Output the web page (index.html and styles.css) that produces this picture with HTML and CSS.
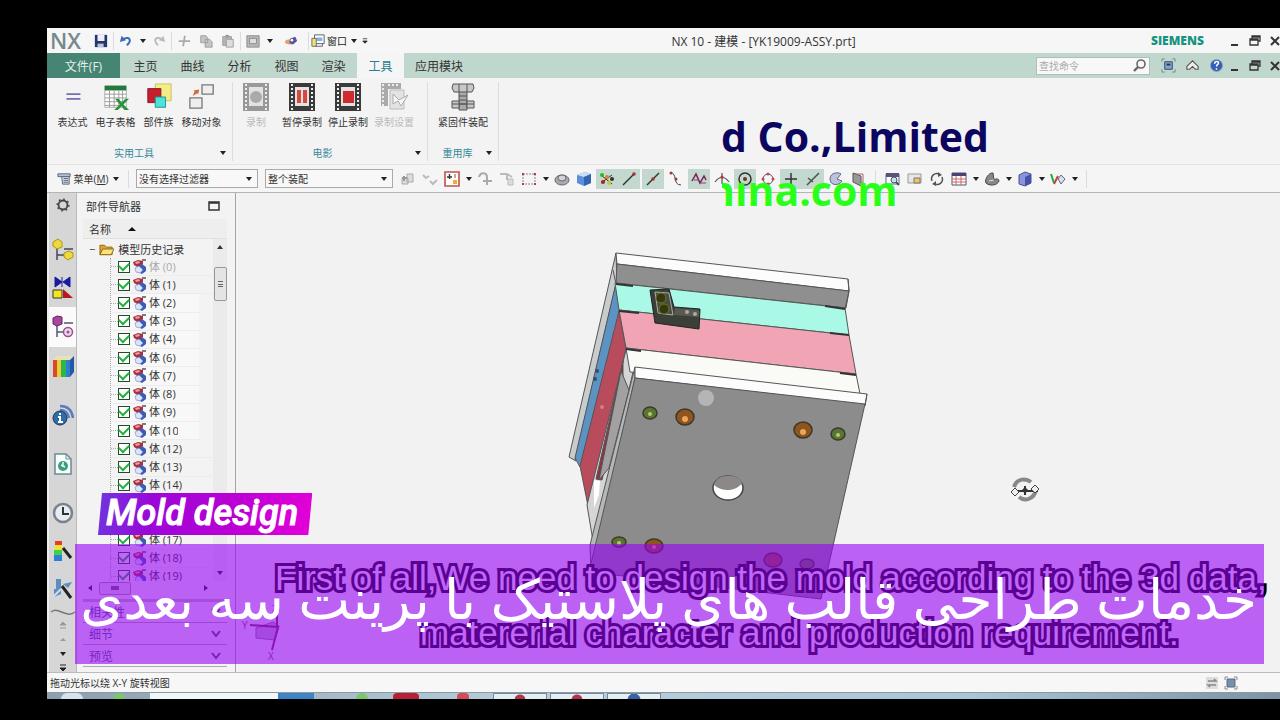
FILE: index.html
```html
<!DOCTYPE html>
<html lang="zh-CN">
<head>
    <meta charset="UTF-8">
    <meta name="viewport" content="width=device-width, initial-scale=1.0">
    <title>NX 10 - 建模 - [YK19009-ASSY.prt]</title>
    <link rel="stylesheet" href="styles.css">
</head>
<body>
    <!-- Shared icons -->
    <svg class="defs" aria-hidden="true">
        <symbol id="down" viewBox="0 0 8 6"><path d="M1 1h6L4 5z" fill="#222"/></symbol>
        <symbol id="min" viewBox="0 0 12 12"><path d="M2 10h7" stroke="currentColor" stroke-width="2"/></symbol>
        <symbol id="restore" viewBox="0 0 12 12"><path d="M3 4V1h8v5H9M1 4h8v6H1zM1 5h8M3 2h8" fill="none" stroke="currentColor" stroke-width="1.3"/></symbol>
        <symbol id="close" viewBox="0 0 12 12"><path d="M2 2l8 8M10 2l-8 8" stroke="currentColor" stroke-width="2"/></symbol>
        <symbol id="part" viewBox="0 0 15 15">
            <path d="M1 3l5-2 5 1v3l-4 4-5-3z" fill="#a93040"/><path d="M3 3l4-1 1 2-4 1z" fill="#e8a0a0"/>
            <path d="M10 1h4" stroke="#555" stroke-width="1.5"/>
            <path d="M6 8l4-3 4 3v4l-4 3-4-2z" fill="#3d5cb8"/><path d="M3 9l4-2 4 4-3 3-4-1z" fill="#dbe6fa" stroke="#6d86c4" stroke-width=".6"/>
        </symbol>
        <symbol id="film" viewBox="0 0 28 30">
            <path d="M1 1h26v28H1z" fill="currentColor"/>
            <path d="M4 2v26M24 2v26" stroke="#eee" stroke-width="2" stroke-dasharray="2 2"/>
            <path d="M7 5h14v19H7z" fill="#e3e3e3"/>
        </symbol>
        <symbol id="chev" viewBox="0 0 10 8"><path d="M1 1l4 5 4-5" fill="none" stroke="#4a4a66" stroke-width="2"/></symbol>
    </svg>

    <div class="screen">
        <div class="app">
            <header class="titlebar">
                <span class="logo">NX</span>
                <div class="quick">
                    <button class="tool" aria-label="保存"><svg viewBox="0 0 16 16"><path d="M1 1h14v14H1z" fill="#26356b"/><path d="M4 1h8v7H4z" fill="#eef"/><path d="M4 11h7v4H4z" fill="#bcc4dd"/></svg></button>
                    <i class="sep"></i>
                    <button class="tool" aria-label="撤消"><svg viewBox="0 0 16 16"><path d="M4 7c3-4 10-3 8 2-1 2-2 3-3 4" fill="none" stroke="#3a6cb8" stroke-width="2.4"/><path d="M1 9l2-7 5 5z" fill="#3a6cb8"/></svg></button>
                    <button class="arrow" aria-label="撤消列表"><svg><use href="#down"/></svg></button>
                    <button class="tool" aria-label="重做"><svg viewBox="0 0 16 16"><path d="M12 7C9 3 2 4 4 9c1 2 2 3 3 4" fill="none" stroke="#bbb" stroke-width="2.2"/><path d="M15 9l-2-7-5 5z" fill="#bbb"/></svg></button>
                    <i class="sep"></i>
                    <button class="tool" aria-label="剪切"><svg viewBox="0 0 16 16"><path d="M2 8h13M9 2L7 14" stroke="#aaa" stroke-width="2"/></svg></button>
                    <button class="tool" aria-label="复制"><svg viewBox="0 0 16 16"><path d="M2 2h6l2 3v5H2zM7 6h5l3 3v6H7z" fill="#c6c6c6" stroke="#999"/></svg></button>
                    <button class="tool" aria-label="粘贴"><svg viewBox="0 0 16 16"><path d="M2 3h10v10H2z" fill="#b5b5b5" stroke="#999"/><path d="M5 1h4v3H5z" fill="#999"/><path d="M6 6h8v9H6z" fill="#ddd" stroke="#999"/></svg></button>
                    <i class="sep"></i>
                    <button class="tool" aria-label="命令"><svg viewBox="0 0 16 16"><path d="M1 2h14v13H1z" fill="#b7b7b7" stroke="#888"/><path d="M4 5h8v6H4z" fill="#ddd" stroke="#888"/></svg></button>
                    <button class="arrow" aria-label="命令列表"><svg><use href="#down"/></svg></button>
                    <button class="tool wide" aria-label="触控"><svg viewBox="0 0 16 16"><ellipse cx="7" cy="9" rx="6" ry="3" fill="#e4a06e"/><path d="M7 5l6-2 2 5-5 4-4-2z" fill="#55549c"/><circle cx="9" cy="7" r="1.5" fill="#fff"/></svg></button>
                    <i class="sep"></i>
                    <button class="tool window-menu"><svg viewBox="0 0 16 16"><path d="M4 1h11v10H4z" fill="#fff" stroke="#456"/><path d="M6 4h7v4H6z" fill="#8cb0e0"/><path d="M1 5h5v9H1z" fill="#efe07a" stroke="#665"/><path d="M5 14h8v-3" fill="none" stroke="#557"/></svg>窗口</button>
                    <button class="arrow" aria-label="窗口列表"><svg><use href="#down"/></svg></button>
                    <button class="arrow" aria-label="工具条选项"><svg viewBox="0 0 8 8"><path d="M1 1h6M1 4h6L4 7z" fill="#222" stroke="#222"/></svg></button>
                </div>
                <h1 class="title">NX 10 - 建模 - [YK19009-ASSY.prt]</h1>
                <span class="brand">SIEMENS</span>
                <div class="win">
                    <button aria-label="最小化"><svg><use href="#min"/></svg></button>
                    <button aria-label="还原"><svg><use href="#restore"/></svg></button>
                    <button aria-label="关闭"><svg><use href="#close"/></svg></button>
                </div>
            </header>

            <nav class="tabs">
                <a class="tab file" href="#file">文件(F)</a>
                <a class="tab" href="#home">主页</a>
                <a class="tab" href="#curve">曲线</a>
                <a class="tab" href="#analysis">分析</a>
                <a class="tab" href="#view">视图</a>
                <a class="tab" href="#render">渲染</a>
                <a class="tab active" href="#tools">工具</a>
                <a class="tab auto" href="#application">应用模块</a>
                <label class="search">
                    <input type="text" placeholder="查找命令" aria-label="查找命令">
                    <svg viewBox="0 0 14 14"><circle cx="8" cy="5" r="4" fill="none" stroke="#666" stroke-width="1.6"/><path d="M5 8l-4 4" stroke="#666" stroke-width="2.4"/></svg>
                </label>
                <div class="tab-tools">
                    <button aria-label="全屏"><svg viewBox="0 0 16 16"><path d="M1 4V1h3M12 1h3v3M15 12v3h-3M4 15H1v-3" fill="none" stroke="#789"/><path d="M4 4h8v8H4z" fill="#7fa6d8" stroke="#345"/><path d="M6 6h4v2H6z" fill="#235"/></svg></button>
                    <button aria-label="最小化功能区"><svg viewBox="0 0 16 16"><path d="M2 9l6-6 6 6v3h-3L8 9l-3 3H2z" fill="#eee" stroke="#555" stroke-width="1.2"/></svg></button>
                    <button aria-label="帮助"><svg viewBox="0 0 16 16"><circle cx="8" cy="8" r="6.5" fill="#3460b4" stroke="#9ab"/><path d="M6 6c0-3 5-3 4 0-.5 1-2 1-2 3M8 11v1.6" fill="none" stroke="#fff" stroke-width="1.6"/></svg></button>
                </div>
                <div class="win">
                    <button aria-label="最小化部件"><svg><use href="#min"/></svg></button>
                    <button aria-label="还原部件"><svg><use href="#restore"/></svg></button>
                    <button aria-label="关闭部件"><svg><use href="#close"/></svg></button>
                </div>
            </nav>

            <div class="ribbon">
                <section class="group">
                    <div class="commands">
                        <button class="cmd"><svg viewBox="0 0 30 30"><path d="M8 12h15M8 17h15" stroke="#7272b0" stroke-width="1.8"/></svg>表达式</button>
                        <button class="cmd"><svg viewBox="0 0 30 30"><path d="M3 3h23v23H3z" fill="#fff" stroke="#aaa"/><path d="M3 3h23v5H3z" fill="#23783c"/><path d="M3 12h23M3 16h23M3 20h23M3 24h20M8 8v18M13 8v18M18 8v18M22 8v18" stroke="#9a9a9a"/><path d="M14 17h4l3 4 4-4h4l-6 6 6 6h-5l-3-4-4 4h-4l6-6z" fill="#27933c"/></svg>电子表格</button>
                        <button class="cmd"><svg viewBox="0 0 30 30"><path d="M11 1h17v18H11z" fill="#f4ed86" stroke="#c9bf60"/><path d="M3 6h14v15H3z" fill="#c71e2d" stroke="#851520"/><path d="M11 15h11v11H11z" fill="#4de3dd" stroke="#1d938e"/></svg>部件族</button>
                        <button class="cmd"><svg viewBox="0 0 30 30"><path d="M15 2h12v10H15zM2 16h13v11H2z" fill="#eee" stroke="#777" stroke-width="1.4"/><path d="M5 14l2-5-1-1 6-1-1 5-1-1z" fill="#d06a35"/></svg>移动对象</button>
                    </div>
                    <footer class="group-name"><span>实用工具</span><button class="arrow" aria-label="实用工具选项"><svg><use href="#down"/></svg></button></footer>
                </section>
                <section class="group movie">
                    <div class="commands">
                        <button class="cmd off"><svg viewBox="0 0 28 30"><use href="#film"/><circle cx="14" cy="15" r="6" fill="#aaa"/></svg>录制</button>
                        <button class="cmd dark"><svg viewBox="0 0 28 30"><use href="#film"/><path d="M9 8h4v13H9zM15 8h4v13h-4z" fill="#d7473d"/></svg>暂停录制</button>
                        <button class="cmd dark"><svg viewBox="0 0 28 30"><use href="#film"/><path d="M9 9h11v12H9z" fill="#cf2b2e"/></svg>停止录制</button>
                        <button class="cmd off"><svg viewBox="0 0 28 30"><path d="M1 1h20v6H8v17H1z" fill="#aaa"/><path d="M3 2v22M8 3h12" stroke="#eee" stroke-dasharray="2 2" stroke-width="2"/><path d="M10 8h14v19H10z" fill="#e3e3e3" stroke="#bbb"/><path d="M13 12l6 6 9-5-7 11-3-5-5 3z" fill="#f6f6f6" stroke="#aaa"/></svg>录制设置</button>
                    </div>
                    <footer class="group-name"><span>电影</span><button class="arrow" aria-label="电影选项"><svg><use href="#down"/></svg></button></footer>
                </section>
                <section class="group reuse">
                    <div class="commands">
                        <button class="cmd"><svg viewBox="0 0 28 30"><path d="M10 8h8v20h-8z" fill="#aaa" stroke="#555"/><path d="M4 2h20l1 4-2 4H5L3 6zM3 19h7v7H3zM18 19h7v7h-7z" fill="#c8c8c8" stroke="#555"/><path d="M10 2v8M18 2v8M10 14h8M10 18h8M10 22h8M3 22h22" stroke="#555"/></svg>紧固件装配</button>
                    </div>
                    <footer class="group-name"><span>重用库</span><button class="arrow" aria-label="重用库选项"><svg><use href="#down"/></svg></button></footer>
                </section>
            </div>

            <div class="selbar">
                <button class="menu"><svg viewBox="0 0 16 16"><path d="M1 3h13v3H1z" fill="#b8c3d4" stroke="#567"/><path d="M5 6h8v8H6z" fill="#dde" stroke="#567"/><path d="M7 8h5M7 10h5M7 12h5" stroke="#567"/></svg><span>菜单(<u>M</u>)</span><svg class="caret"><use href="#down"/></svg></button>
                <i class="sep"></i>
                <label class="combo"><select aria-label="类型过滤器"><option>没有选择过滤器</option></select><svg><use href="#down"/></svg></label>
                <label class="combo"><select aria-label="选择范围"><option>整个装配</option></select><svg><use href="#down"/></svg></label>
                <div class="sel-tools">
                    <button class="tool" aria-label="部件间"><svg viewBox="0 0 16 16"><path d="M2 7h6v6H2zM7 3h6v8H7z" fill="#ddd" stroke="#aaa"/><path d="M4 5v5M2 7h5" stroke="#999" stroke-width="2"/></svg></button>
                    <button class="tool" aria-label="关联"><svg viewBox="0 0 16 16"><path d="M1 4l3 3 3-2M8 10l3 3 4-4" fill="none" stroke="#bbb" stroke-width="2"/></svg></button>
                    <button class="tool" aria-label="常规选择过滤器"><svg viewBox="0 0 16 16"><path d="M1 1h14v14H1z" fill="#fff" stroke="#c0504d" stroke-width="1.6"/><path d="M3 6h5M5.500 3v5" stroke="#333" stroke-width="1.4"/><path d="M9 9h4v4H9z" fill="#efad2f"/><path d="M11 3v4" stroke="#a44"/></svg></button>
                    <button class="arrow" aria-label="过滤器列表"><svg><use href="#down"/></svg></button>
                    <button class="tool" aria-label="移动"><svg viewBox="0 0 16 16"><path d="M2 6c2-6 8-4 8 0v8M6 10h9" fill="none" stroke="#aaa" stroke-width="2"/></svg></button>
                    <button class="tool" aria-label="对齐"><svg viewBox="0 0 16 16"><path d="M1 3h7l5 3M8 4v5" fill="none" stroke="#bbb" stroke-width="2"/><path d="M9 8h5v6H9z" fill="#ddd" stroke="#bbb"/></svg></button>
                    <button class="tool" aria-label="矩形"><svg viewBox="0 0 16 16"><path d="M2 3h12v10H2z" fill="none" stroke="#888" stroke-dasharray="2 1"/><path d="M1 2h2v2H1zM13 2h2v2h-2zM1 12h2v2H1zM13 12h2v2h-2z" fill="#a44"/></svg></button>
                    <button class="arrow" aria-label="选择方式"><svg><use href="#down"/></svg></button>
                    <button class="tool" aria-label="着色"><svg viewBox="0 0 16 16"><ellipse cx="8" cy="9" rx="7" ry="5" fill="#aaa8b3" stroke="#666"/><ellipse cx="8" cy="7" rx="4" ry="3" fill="#d5d0da" stroke="#766"/></svg></button>
                    <button class="tool" aria-label="实体"><svg viewBox="0 0 16 16"><path d="M1 4l8-3 6 2v9l-7 3-7-3z" fill="#5b8fdb"/><path d="M1 4l8-3 6 2-7 3z" fill="#c9dff8"/><path d="M8 6l7-3v9l-7 3z" fill="#3565b0"/></svg></button>
                    <div class="on">
                        <button class="tool" aria-label="捕捉点"><svg viewBox="0 0 16 16"><path d="M2 4l11 9M2 12l11-8" stroke="#333"/><g fill="#2b2"><circle cx="3" cy="4" r="2"/><circle cx="13" cy="8" r="2" fill="#333"/></g><circle cx="8" cy="6" r="2" fill="#d82"/><circle cx="4" cy="11" r="2" fill="#a22"/><circle cx="10" cy="12" r="2" fill="#cc2"/></svg></button>
                        <button class="tool" aria-label="端点"><svg viewBox="0 0 16 16"><path d="M2 14L13 3" stroke="#333" stroke-width="1.4"/><circle cx="13" cy="3" r="1.800" fill="#a33"/></svg></button>
                    </div>
                    <div class="on"><button class="tool" aria-label="中点"><svg viewBox="0 0 16 16"><path d="M2 14L14 2" stroke="#333" stroke-width="1.4"/><circle cx="8" cy="8" r="1.800" fill="#a33"/></svg></button></div>
                    <button class="tool" aria-label="控制点"><svg viewBox="0 0 16 16"><path d="M2 2c8-1 2 12 11 12" fill="none" stroke="#444"/><circle cx="3" cy="2" r="1.500" fill="#a33"/><circle cx="8" cy="8" r="1.500" fill="#a33"/></svg></button>
                    <div class="on"><button class="tool" aria-label="极点"><svg viewBox="0 0 16 16"><path d="M1 10L5 3l4 9 4-7 2 4" fill="none" stroke="#725" stroke-width="1.500"/><path d="M3 9h5M10 12h5" stroke="#a38"/></svg></button></div>
                    <button class="tool" aria-label="交点"><svg viewBox="0 0 16 16"><path d="M1 11c4-6 10-6 14 0M8 2v11" fill="none" stroke="#555" stroke-width="1.2"/><circle cx="8" cy="6" r="1.500" fill="#a33"/></svg></button>
                    <div class="on"><button class="tool" aria-label="圆心"><svg viewBox="0 0 16 16"><circle cx="8" cy="8" r="6" fill="none" stroke="#333" stroke-width="1.5"/><circle cx="8" cy="8" r="2" fill="#732"/></svg></button></div>
                    <button class="tool" aria-label="象限点"><svg viewBox="0 0 16 16"><circle cx="8" cy="8" r="5" fill="none" stroke="#555"/><g fill="#c44"><circle cx="8" cy="3" r="1.500"/><circle cx="8" cy="13" r="1.500"/><circle cx="3" cy="8" r="1.500"/><circle cx="13" cy="8" r="1.500"/></g></svg></button>
                    <div class="on">
                        <button class="tool" aria-label="现有点"><svg viewBox="0 0 16 16"><path d="M2 8h12M8 2v12" stroke="#333" stroke-width="1.500"/></svg></button>
                        <button class="tool" aria-label="曲线上的点"><svg viewBox="0 0 16 16"><path d="M2 14L14 2M3 7l5 4" stroke="#454" stroke-width="1.500"/></svg></button>
                    </div>
                    <button class="tool" aria-label="面上的点"><svg viewBox="0 0 16 16"><path d="M2 8c0-7 9-7 11-5l-4 5 5 2c-3 5-12 5-12-2z" fill="#b9c2df" stroke="#668"/></svg></button>
                    <button class="tool" aria-label="有界栅格"><svg viewBox="0 0 16 16"><path d="M3 2l8 3v10l-8-4z" fill="#999" stroke="#555"/><path d="M5 3h8v9h-2" fill="none" stroke="#a66"/></svg></button>
                    <i class="sep"></i>
                    <button class="tool" aria-label="查找窗口"><svg viewBox="0 0 16 16"><path d="M1 3h13v10H1z" fill="#fff" stroke="#668"/><path d="M1 2h13v4H1z" fill="#557"/><circle cx="9" cy="9" r="3" fill="#cde" stroke="#456"/><path d="M11 11l3 3" stroke="#456" stroke-width="2"/></svg></button>
                    <button class="tool" aria-label="缩放"><svg viewBox="0 0 16 16"><path d="M1 3h13v9H1z" fill="#e6e6e6" stroke="#999"/><path d="M7 7h6v5H7z" fill="#efc65a" stroke="#777"/></svg></button>
                    <button class="tool" aria-label="旋转"><svg viewBox="0 0 16 16"><path d="M3 10C1 5 6 1 10 3M13 6c2 5-3 9-7 7" fill="none" stroke="#555" stroke-width="1.500"/><path d="M9 1l4 3-4 2zM7 10l-4 3 4 2z" fill="#555"/></svg></button>
                    <button class="tool" aria-label="布局"><svg viewBox="0 0 16 16"><path d="M1 2h14v12H1z" fill="#fff" stroke="#557"/><path d="M1 2h14v3H1z" fill="#447"/><path d="M1 8h14M1 11h14M5 5v9M10 5v9" stroke="#c66"/></svg></button>
                    <button class="arrow" aria-label="布局列表"><svg><use href="#down"/></svg></button>
                    <button class="tool" aria-label="渲染样式"><svg viewBox="0 0 16 16"><path d="M2 12c-2-3 3-11 7-10l1 7c3-2 5-1 5 1-2 5-10 5-13 2z" fill="#888" stroke="#444"/><path d="M5 10l5-1" stroke="#ddd"/></svg></button>
                    <button class="arrow" aria-label="样式列表"><svg><use href="#down"/></svg></button>
                    <button class="tool" aria-label="定向视图"><svg viewBox="0 0 16 16"><path d="M2 4l6-3 6 2v9l-6 3-6-2z" fill="#8a93dd" stroke="#458"/><path d="M8 6l6-3v9l-6 3z" fill="#4550ac"/></svg></button>
                    <button class="arrow" aria-label="视图列表"><svg><use href="#down"/></svg></button>
                    <button class="tool" aria-label="编辑截面"><svg viewBox="0 0 16 16"><path d="M1 3l3 9" stroke="#2a3" stroke-width="2"/><path d="M4 13l4-8" stroke="#b44" stroke-width="2"/><path d="M8 8l3-4 4 4-4 5z" fill="#dde" stroke="#668"/></svg></button>
                    <button class="arrow" aria-label="截面列表"><svg><use href="#down"/></svg></button>
                    <i class="sep"></i>
                </div>
            </div>

            <main class="work">
                <aside class="resource">
                    <button class="gear" aria-label="资源条选项"><svg viewBox="0 0 20 20"><circle cx="10" cy="10" r="5" fill="none" stroke="#444" stroke-width="2"/><circle cx="10" cy="10" r="6.500" fill="none" stroke="#444" stroke-width="1.500" stroke-dasharray="2 3"/></svg></button>
                    <button aria-label="装配导航器"><svg viewBox="0 0 24 24"><path d="M6 10v12M6 17h8M13 11h9" fill="none" stroke="#446" stroke-width="1.500"/><path d="M2 4l5-3 4 3v5l-5 2-4-3zM13 15l5-2 4 2v4l-5 3-4-3z" fill="#f0d545" stroke="#a90"/></svg></button>
                    <button aria-label="约束导航器"><svg viewBox="0 0 24 24"><path d="M4 1v10l7-5zM19 1v10l-7-5zM11 1v10" fill="#1a1aa0" stroke="#1a1aa0"/><path d="M2 14h9v8H2z" fill="#f5e51e" stroke="#333"/><path d="M12 13l10 9H12z" fill="#b91820"/></svg></button>
                    <button class="current" aria-label="部件导航器"><svg viewBox="0 0 24 24"><path d="M6 10v12M6 17h7M13 8h9" fill="none" stroke="#557" stroke-width="1.500"/><path d="M2 3l4-2 5 1v7l-5 2-4-2z" fill="#a4479d" stroke="#6e2268"/><circle cx="17" cy="17" r="4.500" fill="#ecd6ec" stroke="#96528f" stroke-width="1.500"/><circle cx="17" cy="17" r="1.500" fill="#96528f"/></svg></button>
                    <button aria-label="重用库"><svg viewBox="0 0 24 24"><path d="M2 6l4-4h17l-4 4z" fill="#e9e0b4"/><path d="M2 6h5v17H2z" fill="#d8492d"/><path d="M6 6h4v17H6z" fill="#e7cf35"/><path d="M10 6h5v17h-5z" fill="#2fb64b"/><path d="M15 6h4v17h-4z" fill="#2e7dd0"/><path d="M19 6l4-4v16l-4 5z" fill="#2158a8"/></svg></button>
                    <button class="tall" aria-label="HD3D 工具"><svg viewBox="0 0 24 24"><path d="M9 3c7 0 12 4 13 12M9 7c5 0 8 3 9 8" fill="none" stroke="#5a7dbd" stroke-width="2.4"/><circle cx="9" cy="15" r="7" fill="#2f6da7" stroke="#235"/><path d="M9 10v2M7 14h2v5M7 19h5" stroke="#fff" stroke-width="2"/></svg></button>
                    <button class="tall" aria-label="Web 浏览器"><svg viewBox="0 0 24 24"><path d="M4 2h11l5 5v15H4z" fill="#f8ffff" stroke="#6a8b95" stroke-width="1.500"/><path d="M15 2v5h5" fill="none" stroke="#6a8b95"/><circle cx="12" cy="14" r="5" fill="#3d9c79"/><path d="M12 10v5M10 13l4 2" stroke="#dff" stroke-width="1.500"/></svg></button>
                    <button class="tall" aria-label="历史记录"><svg viewBox="0 0 24 24"><circle cx="12" cy="12" r="9" fill="#e7ecf3" stroke="#7a828f" stroke-width="2.500"/><path d="M12 6v7h6" fill="none" stroke="#333" stroke-width="2"/></svg></button>
                    <button aria-label="系统材料"><svg viewBox="0 0 24 24"><path d="M4 2h7v4H4z" fill="#e0402b"/><path d="M4 6h7v5H4z" fill="#f4e32b"/><path d="M3 11h8v5H3z" fill="#3fd04c"/><path d="M3 16h8v6H3z" fill="#2b7fd6"/><path d="M12 9l8 10" stroke="#222" stroke-width="3"/></svg></button>
                    <button aria-label="加工向导"><svg viewBox="0 0 24 24"><path d="M5 2h5v15l-7 3v-8h2zM12 7l9-2-4 6z" fill="#5c8fbf"/><path d="M11 9l9 12" stroke="#222" stroke-width="3"/><path d="M2 20l8-8" stroke="#cde" stroke-width="2"/></svg></button>
                    <div class="more">
                        <svg viewBox="0 0 26 8"><path d="M1 4c8-6 15 7 24 0" fill="none" stroke="#777" stroke-width="1.500"/></svg>
                        <svg class="mini" viewBox="0 0 8 8"><path d="M1 3h6L4 0zM1 6h6" fill="#999" stroke="#999"/></svg>
                        <svg class="mini" viewBox="0 0 8 8"><path d="M1 5h6L4 2z" fill="#999"/></svg>
                        <svg class="mini" viewBox="0 0 8 8"><path d="M1 2h6L4 6z" fill="#222"/></svg>
                        <svg class="mini" viewBox="0 0 8 8"><path d="M1 1h6M1 4h6L4 7z" fill="#222" stroke="#222"/></svg>
                    </div>
                </aside>

                <section class="navigator">
                    <h2 class="nav-title">部件导航器<button aria-label="浮动"><svg viewBox="0 0 12 10"><path d="M1 1h10v8H1zM1 2h10" fill="none" stroke="#333" stroke-width="1.500"/></svg></button></h2>
                    <div class="nav-col">名称<svg viewBox="0 0 10 6"><path d="M1 5h8L5 1z" fill="#111"/></svg></div>
                    <div class="tree">
                        <div class="tree-main">
                            <div class="root"><span>−</span><svg viewBox="0 0 16 14"><path d="M1 3h5l2 2h6v8H1z" fill="#e0a526" stroke="#8a6714"/><path d="M4 7h12l-3 6H1z" fill="#fbe27a" stroke="#8a6714"/></svg>模型历史记录</div>
                            <ul class="bodies">
                                <li class="dim"><label><input type="checkbox" checked><svg><use href="#part"/></svg>体 (0)</label></li>
                                <li><label><input type="checkbox" checked><svg><use href="#part"/></svg>体 (1)</label></li>
                                <li class="lit"><label><input type="checkbox" checked><svg><use href="#part"/></svg>体 (2)</label></li>
                                <li class="lit"><label><input type="checkbox" checked><svg><use href="#part"/></svg>体 (3)</label></li>
                                <li class="lit"><label><input type="checkbox" checked><svg><use href="#part"/></svg>体 (4)</label></li>
                                <li class="lit"><label><input type="checkbox" checked><svg><use href="#part"/></svg>体 (6)</label></li>
                                <li class="lit"><label><input type="checkbox" checked><svg><use href="#part"/></svg>体 (7)</label></li>
                                <li class="lit"><label><input type="checkbox" checked><svg><use href="#part"/></svg>体 (8)</label></li>
                                <li class="lit"><label><input type="checkbox" checked><svg><use href="#part"/></svg>体 (9)</label></li>
                                <li class="lit cut"><label><input type="checkbox" checked><svg><use href="#part"/></svg>体 (10)</label></li>
                                <li><label><input type="checkbox" checked><svg><use href="#part"/></svg>体 (12)</label></li>
                                <li><label><input type="checkbox" checked><svg><use href="#part"/></svg>体 (13)</label></li>
                                <li><label><input type="checkbox" checked><svg><use href="#part"/></svg>体 (14)</label></li>
                                <li><label><input type="checkbox" checked aria-label="体 15"><svg><use href="#part"/></svg></label></li>
                                <li><label><input type="checkbox" checked aria-label="体 16"><svg><use href="#part"/></svg></label></li>
                                <li><label><input type="checkbox" checked><svg><use href="#part"/></svg>体 (17)</label></li>
                                <li><label><input type="checkbox" checked><svg><use href="#part"/></svg>体 (18)</label></li>
                                <li><label><input type="checkbox" checked><svg><use href="#part"/></svg>体 (19)</label></li>
                            </ul>
                        </div>
                        <div class="vscroll">
                            <svg viewBox="0 0 8 6"><path d="M1 5h6L4 1z" fill="#333"/></svg>
                            <span class="thumb"></span>
                            <svg class="end"><use href="#down"/></svg>
                        </div>
                    </div>
                    <div class="hscroll">
                        <svg viewBox="0 0 6 8"><path d="M5 1v6L1 4z" fill="#222"/></svg>
                        <span class="thumb"></span>
                        <svg class="end" viewBox="0 0 6 8"><path d="M1 1v6l4-3z" fill="#222"/></svg>
                    </div>
                    <button class="fold">相关性<svg><use href="#chev"/></svg></button>
                    <button class="fold">细节<svg><use href="#chev"/></svg></button>
                    <button class="fold">预览<svg><use href="#chev"/></svg></button>
                </section>

                <div class="viewport">
                    <svg class="model" viewBox="236 193 1044 479" role="img" aria-label="模具装配">
                        <g stroke="#555" stroke-width="1" stroke-linejoin="round">
                            <path d="M616 253l1 30-41 178-7-4z" fill="#c9cccd"/>
                            <path d="M613 270l3 14-41 176" fill="none"/>
                            <path d="M616 283l4 28-40 156-5-9z" fill="#5d93c3"/>
                            <path d="M619 311l7 38-38 157-8-40z" fill="#b94c5c"/>
                            <path d="M626 350l8 18-41 173-6-36z" fill="#d5d5d5"/>
                            <path d="M623 361l-27 118 6 1 21-90z" fill="#8e3343"/>
                            <path d="M621 371l8 19-20 78-10 12z" fill="#a3a0a2"/>
                            <path d="M616 253l232 26 1 12-232-27z" fill="#fcfcfc"/>
                            <path d="M617 264l232 27-3 17-230-25z" fill="#8f8f8f"/>
                            <path d="M848 279l1 12-4 18" fill="none"/>
                            <path d="M615 283l230 25 4 27-230-25z" fill="#aaf8e6"/>
                            <path d="M619 310l230 25 7 39-230-26z" fill="#f1a4b4"/>
                            <path d="M626 348l230 26 4 20-230-22z" fill="#fafaf7"/>
                            <path d="M635 367l-45 178 1 28 44-195z" fill="#b5b8b8"/>
                            <path d="M635 367l232 27-2 11-230-27z" fill="#fcfcfc"/>
                            <path d="M635 378l230 26-44 195-232-27z" fill="#8c8c8c"/>
                            <path d="M867 394l-2 12" fill="none"/>
                        </g>
                        <path d="M616 284l17 2M619 311l20 2M626 349l15 2M825 306l20 3M830 333l19 2M840 373l16 2" stroke="#333" stroke-width="2"/>
                        <path d="M594 480l6 1-1 14-5 13z" fill="#fff"/>
                        <g fill="#34506a"><circle cx="597" cy="371" r="2"/><circle cx="595" cy="379" r="2"/><circle cx="602" cy="407" r="2" fill="#e07a80"/></g>

                        <!-- connector block -->
                        <path d="M650 290l19-1 5 18 26 2-1 20-44-6z" fill="#3b3f38" stroke="#222"/>
                        <path d="M655 292l14 1 4 22-15-2z" fill="#494c40" stroke="#aaa"/>
                        <circle cx="661" cy="298" r="5" fill="#343811" stroke="#717522"/>
                        <circle cx="664" cy="309" r="5" fill="#343811" stroke="#717522"/>
                        <path d="M675 308l24 2v7l-25-2z" fill="#585a52"/>
                        <circle cx="687" cy="312" r="2" fill="#aaa"/><circle cx="695" cy="314" r="2" fill="#aaa"/>

                        <!-- bolts -->
                        <g stroke="#3b3a22" stroke-width="1.500">
                            <g fill="#5a7438"><ellipse cx="650" cy="413" rx="7" ry="6"/><ellipse cx="838" cy="434" rx="7" ry="6"/><ellipse cx="619" cy="542" rx="7" ry="5"/><ellipse cx="807" cy="564" rx="7" ry="5"/></g>
                            <g fill="#8f5420"><ellipse cx="685" cy="417" rx="9" ry="8"/><ellipse cx="803" cy="430" rx="9" ry="8"/><ellipse cx="654" cy="546" rx="9" ry="7"/><ellipse cx="773" cy="560" rx="9" ry="7"/></g>
                        </g>
                        <g fill="#b8c95e"><circle cx="650" cy="414" r="2"/><circle cx="838" cy="435" r="2"/><circle cx="619" cy="543" r="2"/></g>
                        <g fill="#e9a75a"><circle cx="685" cy="419" r="3"/><circle cx="803" cy="432" r="3"/><circle cx="654" cy="547" r="2"/></g>
                        <circle cx="706" cy="398" r="8" fill="#b5b5b5"/>
                        <ellipse cx="728" cy="488" rx="15" ry="12" fill="#fff" stroke="#444" stroke-width="1.500"/>
                        <path d="M714 485c2-12 25-12 28-2-6 9-20 9-28 2z" fill="#8c8888"/>

                        <!-- rotate cursor -->
                        <g fill="none" stroke="#888" stroke-width="4"><path d="M1014 487c3-9 12-9 17-5M1019 497c6 5 15 2 17-7"/></g>
                        <path d="M1013 491h25M1025 486v9" stroke="#333" stroke-width="2"/>
                        <path d="M1011 492l4-4 4 4-4 4zM1031 489l4-4 4 4-4 4z" fill="#eee" stroke="#444"/>
                        <path d="M1022 490l3-3 3 3-3 4z" fill="#333"/>

                        <!-- WCS triad -->
                        <path d="M256 628l17-6 6 4-4 14-19-2z" fill="#c4b5c9" stroke="#857590"/>
                        <path d="M250 625l28 2-6 23M277 626v-11" fill="none" stroke="#733060" stroke-width="2"/>
                        <g class="axis"><text x="272" y="613">Z</text><text x="242" y="629">Y</text><text x="268" y="660">X</text></g>
                    </svg>
                </div>
            </main>

            <footer class="status">
                <span>拖动光标以绕 X-Y 旋转视图</span>
                <div class="status-icons">
                    <svg viewBox="0 0 14 14"><path d="M1 1h12v12H1z" fill="#ddd"/><path d="M3 5h8l-2-2M11 9H3l2 2" fill="none" stroke="#888" stroke-width="1.500"/></svg>
                    <svg viewBox="0 0 14 14"><path d="M1 4V1h3M10 1h3v3M13 10v3h-3M4 13H1v-3" fill="none" stroke="#888"/><path d="M3 3h8v8H3z" fill="#6f93b4" stroke="#667"/></svg>
                </div>
            </footer>
            <div class="taskbar">
                <i class="orb"></i><i class="leaf"></i><i class="pane"></i><i class="blue"></i><i class="leaf"></i><i class="red"></i><i class="red small"></i><i class="task"></i><i class="task"></i><i class="task"></i>
            </div>
        </div>

        <div class="company">d Co.,Limited</div>
        <div class="site"><span>hina.com</span></div>
        <div class="badge"><span>Mold design</span></div>
        <div class="caption" lang="en">
            <p>First of all,We need to design the mold according to the 3d data,</p>
            <p class="second">matererial character and production requirement.</p>
        </div>
        <div class="banner" lang="fa" dir="rtl">خدمات طراحی قالب های پلاستیک با پرینت سه بعدی</div>
    </div>
</body>
</html>
```
FILE: styles.css
```css
* {
    box-sizing: border-box;
}
body {
    margin: 0;
    background: #000;
    color: #333;
    font-family: "Open Sans", "Noto Sans CJK SC", sans-serif;
    font-size: 10px;
}
button {
    display: flex;
    align-items: center;
    justify-content: center;
    margin: 0;
    padding: 0;
    border: 0;
    background: none;
    color: inherit;
    font: inherit;
    white-space: nowrap;
}
svg {
    display: block;
    flex: none;
}
h1, h2, p, ul {
    margin: 0;
    padding: 0;
    font-weight: normal;
}
.defs {
    position: absolute;
    width: 0;
    height: 0;
}
.screen {
    position: relative;
    display: flex;
    min-height: 100vh;
    padding: 28px 0 21px 47px;
    overflow: hidden;
}
.app {
    flex: 1;
    min-width: 0;
    display: flex;
    flex-direction: column;
    background: #f3f3f3;
}
.sep {
    width: 1px;
    height: 18px;
    margin: 0 4px;
    background: #dcdcdc;
}

/* title bar */
.titlebar {
    display: flex;
    align-items: center;
    height: 25px;
    background: #f6f6f6;
}
.logo {
    width: 43px;
    padding-left: 3px;
    color: #76898c;
    font-size: 22px;
    font-weight: 600;
    line-height: 25px;
}
.quick {
    display: flex;
    align-items: center;
}
.quick .sep {
    margin: 0 1px;
}
.tool {
    width: 22px;
    height: 20px;
}
.tool svg {
    width: 16px;
    height: 16px;
}
.quick .tool svg {
    width: 14px;
    height: 14px;
}
.arrow {
    width: 11px;
    height: 16px;
}
.arrow svg {
    width: 8px;
    height: 6px;
}
.quick .tool.wide {
    width: 32px;
}
.quick .window-menu {
    gap: 2px;
    width: 38px;
    color: #222;
}
.title {
    flex: 1;
    padding-left: 6px;
    text-align: center;
    font-size: 12px;
    color: #333;
}
.brand {
    width: 74px;
    color: #16937f;
    font-size: 12px;
    font-weight: 800;
}
.win {
    display: flex;
    margin-right: -5px;
    color: #333;
}
.win button {
    width: 20px;
    height: 20px;
}
.win svg {
    width: 12px;
    height: 12px;
}

/* tabs */
.tabs {
    display: flex;
    align-items: center;
    height: 25px;
    background: #c0d7cd;
}
.tab {
    display: flex;
    align-items: center;
    justify-content: center;
    width: 47px;
    height: 100%;
    color: #333;
    font-size: 12px;
    text-decoration: none;
}
.tab.file {
    width: 73px;
    margin-right: 2px;
    background: #468474;
    color: #e4f2ec;
}
.tab.active {
    background: #f5f5f5;
    color: #247f92;
}
.tab.auto {
    width: auto;
    padding: 0 11px;
}
.search {
    display: flex;
    align-items: center;
    width: 114px;
    height: 18px;
    margin-left: auto;
    padding: 0 2px;
    border: 1px solid #aebfb8;
    background: #f8f8f8;
}
.search input {
    flex: 1;
    min-width: 0;
    padding: 0;
    border: 0;
    background: none;
    font: inherit;
}
.search input::placeholder {
    color: #aaa;
}
.search svg {
    width: 14px;
    height: 14px;
}
.tab-tools {
    display: flex;
    margin-left: 6px;
}
.tab-tools button {
    width: 24px;
}
.tab-tools svg {
    width: 15px;
    height: 15px;
}
.tabs .win {
    margin-left: -3px;
}

/* ribbon */
.ribbon {
    display: flex;
    height: 86px;
    padding: 4px 0 3px;
    background: #f3f3f3;
}
.group {
    display: flex;
    flex-direction: column;
    justify-content: space-between;
    width: 186px;
    padding: 0 4px;
    border-right: 1px solid #ddd;
}
.group.movie {
    width: 195px;
    padding: 0 4px 0 0;
}
.group.reuse {
    width: 71px;
}
.commands {
    display: flex;
}
.cmd {
    flex-direction: column;
    gap: 3px;
    width: 43px;
    color: #333;
    line-height: 14px;
}
.cmd svg {
    width: 28px;
    height: 30px;
}
.movie .cmd {
    width: 46px;
}
.reuse .cmd {
    width: 62px;
}
.cmd.off {
    color: #bbb;
}
.cmd.off svg {
    color: #999;
}
.cmd.dark svg {
    color: #3a3a3a;
}
.group-name {
    display: flex;
    align-items: center;
    color: #35889b;
}
.group-name span {
    flex: 1;
    text-align: center;
    line-height: 14px;
}

/* selection bar */
.selbar {
    display: flex;
    align-items: center;
    height: 29px;
    border-top: 1px solid #e4e4e4;
    border-bottom: 1px solid #b5b5b5;
    background: #f5f5f5;
}
.menu {
    gap: 2px;
    width: 77px;
    padding-left: 6px;
}
.menu svg {
    width: 15px;
    height: 15px;
}
.menu .caret {
    width: 8px;
    height: 6px;
    margin-left: 2px;
}
.combo {
    display: flex;
    align-items: center;
    width: 122px;
    height: 19px;
    margin-left: 3px;
    margin-right: 4px;
    border: 1px solid #aaa;
    background: #f8f8f8;
}
.combo select {
    flex: 1;
    min-width: 0;
    height: 17px;
    padding: 0 2px;
    border: 0;
    appearance: none;
    background: none;
    color: #333;
    font: inherit;
}
.combo svg {
    width: 8px;
    height: 6px;
    margin-right: 4px;
    pointer-events: none;
}
.combo + .combo {
    width: 128px;
}
.sel-tools {
    display: flex;
    align-items: center;
}
.on {
    display: flex;
    margin: 0 1px;
    background: #c3d8cf;
}
.sel-tools .sep {
    margin: 0 6px;
}

/* work area */
.work {
    flex: 1;
    display: flex;
}
.resource {
    display: flex;
    flex-direction: column;
    width: 29px;
    background: #d6d6d6;
    border-left: 2px solid #eee;
}
.resource button {
    height: 38px;
}
.resource svg {
    width: 24px;
    height: 24px;
}
.resource .gear {
    height: 24px;
    margin-bottom: 14px;
}
.resource .gear svg {
    width: 18px;
    height: 18px;
}
.resource .current {
    height: 40px;
    background: #fafafa;
}
.resource .tall {
    height: 49px;
    padding-top: 10px;
}
.more {
    display: flex;
    flex-direction: column;
    align-items: center;
    gap: 6px;
}
.resource .more svg {
    width: 26px;
    height: 8px;
}
.resource .more .mini {
    width: 8px;
}
.navigator {
    display: flex;
    flex-direction: column;
    width: 160px;
    padding: 0 8px 5px 6px;
    border-left: 1px solid #bbb;
    border-right: 1px solid #a5a5a5;
}
.nav-title {
    display: flex;
    align-items: center;
    justify-content: space-between;
    height: 26px;
    padding: 0 7px 0 3px;
    font-size: 11px;
}
.nav-title svg {
    width: 12px;
    height: 10px;
}
.nav-col {
    display: flex;
    align-items: center;
    gap: 16px;
    height: 20px;
    padding-left: 6px;
    border-bottom: 1px solid #e0e0e0;
    background: #eee;
    font-size: 11px;
}
.nav-col svg {
    width: 10px;
    height: 6px;
}
.tree {
    flex: 1;
    display: flex;
    overflow: hidden;
}
.tree-main {
    flex: 1;
    display: flex;
    flex-direction: column;
    margin-bottom: -5px;
}
.root {
    display: flex;
    align-items: center;
    gap: 4px;
    height: 19px;
    padding-left: 6px;
    font-size: 11px;
}
.root svg {
    width: 15px;
    height: 14px;
}
.bodies {
    flex: 1;
    display: flex;
    flex-direction: column;
    margin-left: 27px;
    border-left: 1px dotted #aaa;
    list-style: none;
}
.bodies li {
    flex: 1;
    display: flex;
    align-items: center;
    border-bottom: 1px solid #ececec;
    font-size: 11px;
    line-height: 16px;
}
.bodies li::before {
    content: "";
    width: 7px;
    border-top: 1px dotted #aaa;
}
.bodies li.lit {
    margin-right: 14px;
    background: #f8f8f8;
}
.bodies li.dim {
    color: #aaa;
}
.bodies label {
    display: flex;
    align-items: center;
    gap: 2px;
    white-space: nowrap;
    overflow: hidden;
}
.bodies .cut label {
    width: 60px;
}
.bodies input {
    flex: none;
    display: grid;
    place-items: center;
    width: 12px;
    height: 12px;
    margin: 0;
    appearance: none;
    border: 1px solid #234a2c;
    background: #fff;
}
.bodies input:checked::before {
    content: "";
    width: 8px;
    height: 5px;
    margin-top: -3px;
    border-left: 2px solid #22b13c;
    border-bottom: 2px solid #22b13c;
    transform: rotate(-45deg);
}
.bodies svg {
    width: 15px;
    height: 15px;
}
.vscroll {
    display: flex;
    flex-direction: column;
    align-items: center;
    width: 14px;
    padding: 5px 0;
    background: #ebebeb;
}
.vscroll svg {
    width: 8px;
    height: 6px;
}
.vscroll .thumb {
    width: 13px;
    height: 34px;
    margin-top: 17px;
    border: 1px solid #999;
    border-radius: 2px;
    background: linear-gradient(#666, #666) center / 5px 1px no-repeat, linear-gradient(#666, #666) center 13px / 5px 1px no-repeat, linear-gradient(#666, #666) center 18px / 5px 1px no-repeat, #e4e4e4;
}
.vscroll .end {
    margin-top: auto;
}
.hscroll {
    display: flex;
    align-items: center;
    height: 14px;
    margin: 0 18px 4px 4px;
}
.hscroll svg {
    width: 6px;
    height: 8px;
}
.hscroll .thumb {
    width: 32px;
    height: 13px;
    margin-left: 6px;
    border: 1px solid #999;
    border-radius: 2px;
    background: linear-gradient(#666, #666) center / 8px 4px no-repeat, #e4e4e4;
}
.hscroll .end {
    margin-left: auto;
}
.fold {
    justify-content: space-between;
    height: 22px;
    padding: 0 6px;
    border-bottom: 1px solid #aaa;
    color: #49617c;
    font-size: 12px;
}
.fold:first-of-type {
    height: 24px;
    border-top: 3px solid #bbb;
}
.fold svg {
    width: 10px;
    height: 8px;
}
.viewport {
    flex: 1;
    min-width: 0;
    background: #f2f2f2;
}
.model {
    width: 100%;
    height: 100%;
}
.axis {
    fill: #99407c;
    font-size: 10px;
}

/* status and task bar */
.status {
    display: flex;
    align-items: center;
    justify-content: space-between;
    height: 20px;
    padding: 0 42px 0 3px;
    border-top: 1px solid #bbb;
    background: #f7f7f7;
}
.status-icons {
    display: flex;
    gap: 5px;
}
.status-icons svg {
    width: 14px;
    height: 14px;
}
.taskbar {
    display: flex;
    align-items: flex-end;
    height: 7px;
    padding-left: 14px;
    border-top: 1px solid #889aa5;
    background: linear-gradient(90deg, #8ba0ac, #b9cfdb 40%, #a9c5d9 75%, #7d93a5);
}
.taskbar i {
    height: 6px;
}
.taskbar .orb {
    width: 22px;
    margin-right: 30px;
    border-radius: 10px 10px 0 0;
    background: #d5e3ea;
}
.taskbar .leaf {
    width: 12px;
    margin-right: 25px;
    border-radius: 6px 6px 0 0;
    background: #7ec66b;
}
.taskbar .pane {
    width: 128px;
    background: #f1f6f8;
}
.taskbar .blue {
    width: 36px;
    margin-right: 42px;
    background: #3e83c4;
}
.taskbar .red {
    width: 26px;
    margin-right: 38px;
    border-radius: 4px 4px 0 0;
    background: #b81f35;
}
.taskbar .small {
    width: 12px;
    margin-right: 24px;
    background: #d34c58;
}
.taskbar .task {
    width: 54px;
    margin-right: 3px;
    border: 1px solid #789;
    border-bottom: 0;
    background: radial-gradient(circle at 50% 6px, #b4324a 5px, transparent 6px), #e5eef3;
}
.taskbar .task:last-child {
    background: radial-gradient(circle at 50% 6px, #3a60a8 6px, transparent 7px), #e5eef3;
}

/* video overlays */
.company,
.site,
.badge,
.caption,
.banner {
    position: absolute;
    white-space: nowrap;
}
.company,
.site {
    font-family: "Open Sans", sans-serif;
    font-size: 41px;
    font-weight: 700;
    line-height: 52px;
}
.company {
    left: 721px;
    top: 110px;
    color: #0b0560;
}
.site {
    left: 722px;
    top: 181px;
    height: 36px;
    overflow: hidden;
    color: #2aff1c;
}
.site span {
    display: block;
    margin: -17px 0 0 -14px;
}
.badge {
    left: 98px;
    top: 493px;
    padding: 0 14px 0 8px;
    color: #fff;
    font: italic 500 36px/40px Roboto, sans-serif;
    height: 42px;
    -webkit-text-stroke: 1px #fff;
    background: linear-gradient(100deg, #6f35e0, #9a08d8 25%, #b800d4 60%, #e400d8);
    clip-path: polygon(4px 0, 100% 0, calc(100% - 4px) 100%, 0 100%);
}
.caption {
    left: 275px;
    top: 550px;
    color: #fff;
    font: 35px/55px "Liberation Sans", sans-serif;
    -webkit-text-stroke: 6px #000;
    stroke-linejoin: round;
    paint-order: stroke fill;
}
.caption .second {
    padding-left: 145px;
}
.banner {
    left: 75px;
    right: 16px;
    top: 544px;
    height: 120px;
    padding-right: 7px;
    background: rgba(150, 0, 243, 0.6);
    color: #fff;
    font: 55px/108px "Noto Sans", "DejaVu Sans", sans-serif;
}
```
